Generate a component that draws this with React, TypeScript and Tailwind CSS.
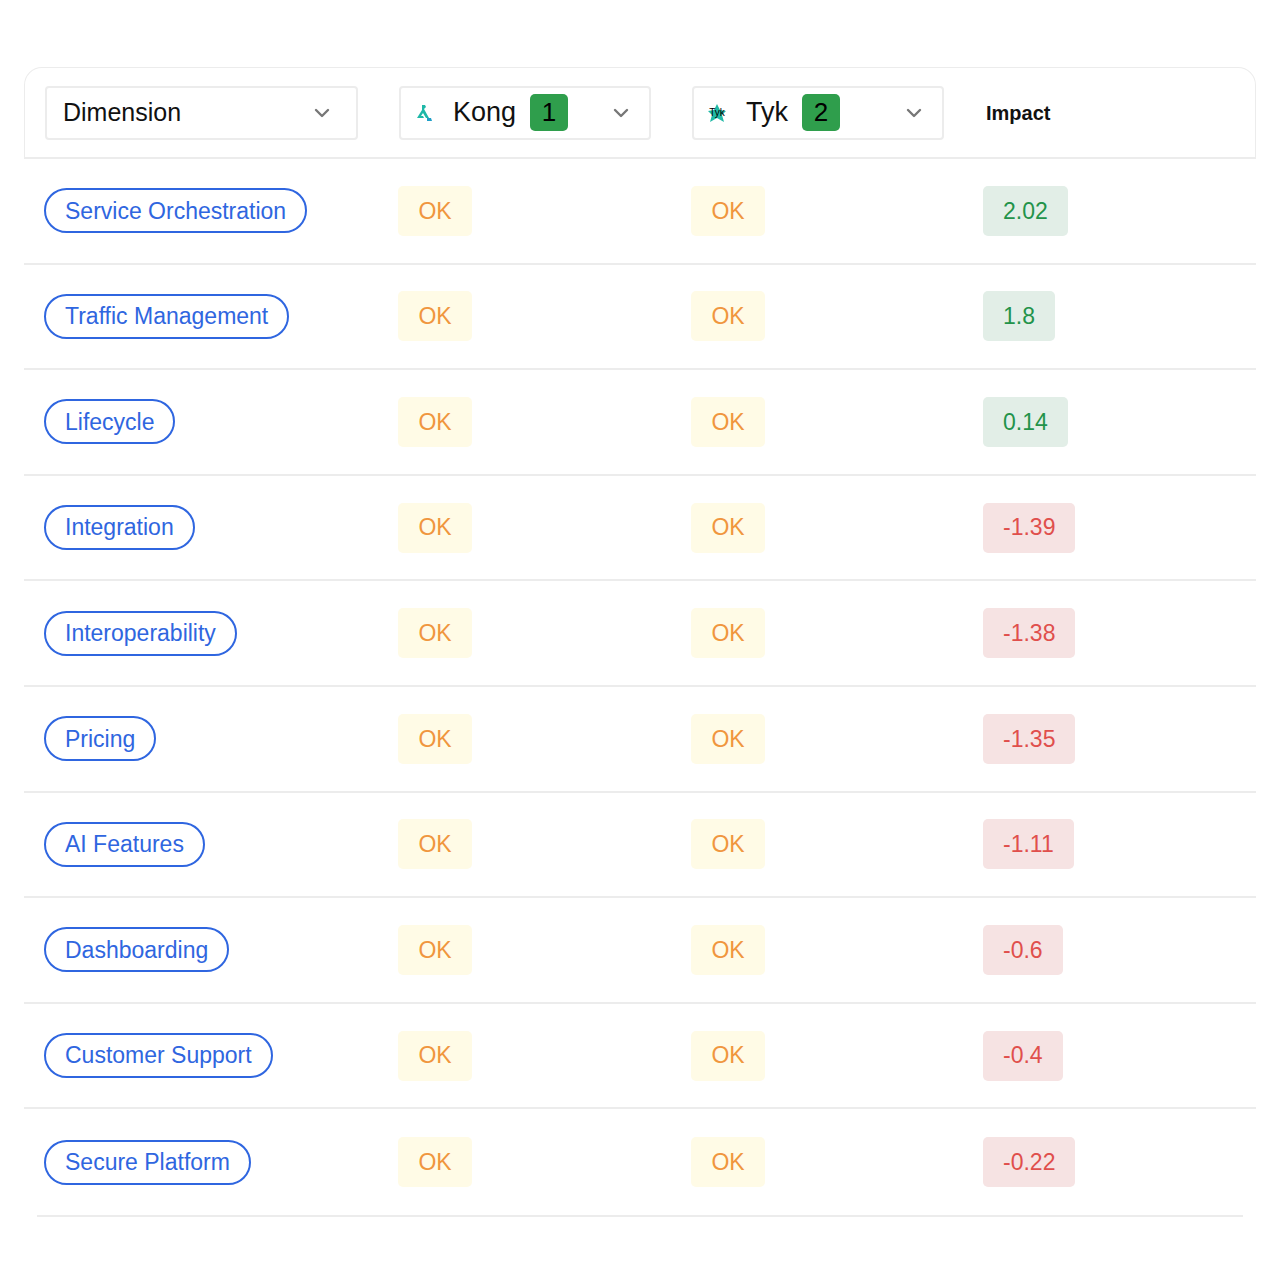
import React from "react";

const rows: [string, string][] = [
  ["Service Orchestration", "2.02"],
  ["Traffic Management", "1.8"],
  ["Lifecycle", "0.14"],
  ["Integration", "-1.39"],
  ["Interoperability", "-1.38"],
  ["Pricing", "-1.35"],
  ["AI Features", "-1.11"],
  ["Dashboarding", "-0.6"],
  ["Customer Support", "-0.4"],
  ["Secure Platform", "-0.22"],
];

const Chevron = () => (
  <svg width="20" height="20" viewBox="0 0 20 20" fill="none" stroke="#777" strokeWidth="2.4" strokeLinecap="round" strokeLinejoin="round">
    <path d="M4 7l6 6 6-6" />
  </svg>
);

const KongIcon = () => (
  <div className="w-[26px] h-[26px] flex items-center justify-center bg-white">
    <svg width="22" height="22" viewBox="0 0 22 22">
      <path d="M9 3h3l1 2-2 2 5 9h-3l-3-5-2 3h2l1 2H4l5-8z" fill="#1fb8a8" />
      <path d="M14 16h4l1 3h-5z" fill="#1f9fc8" />
    </svg>
  </div>
);

const TykIcon = () => (
  <div className="relative w-[26px] h-[26px] flex items-center justify-center">
    <svg width="24" height="24" viewBox="0 0 24 24" className="absolute">
      <path d="M12 3l3 6 6 1-4 4 2 7-7-4-7 4 2-7-4-4 6-1z" fill="#20b9a6" />
    </svg>
    <span className="relative text-[10px] leading-none text-black" style={{ fontFamily: "'Liberation Sans', sans-serif" }}>Tyk</span>
  </div>
);

export default function App() {
  return (
    <div className="w-[1280px] h-[1280px] bg-white pt-[67px] px-[24px]" style={{ fontFamily: "'Liberation Sans', Arial, sans-serif" }}>
      <div className="w-[1232px]">
        <div className="h-[92px] border border-b-2 border-[#ececec] rounded-t-[18px] flex items-center pl-[20px]">
          <div className="w-[313px] h-[54px] border-2 border-[#ececec] rounded-[4px] flex items-center justify-between pl-[16px] pr-[24px]">
            <span className="text-[25px] text-[#111]">Dimension</span>
            <Chevron />
          </div>
          <div className="ml-[41px] w-[252px] h-[54px] border-2 border-[#ececec] rounded-[4px] flex items-center pl-[10px] pr-[18px]">
            <KongIcon />
            <span className="ml-[16px] text-[27px] text-[#111]">Kong</span>
            <span className="ml-[14px] w-[38px] h-[37px] rounded-[5px] bg-[#2f9e4c] text-[26px] text-black flex items-center justify-center">1</span>
            <div className="ml-auto"><Chevron /></div>
          </div>
          <div className="ml-[41px] w-[252px] h-[54px] border-2 border-[#ececec] rounded-[4px] flex items-center pl-[10px] pr-[18px]">
            <TykIcon />
            <span className="ml-[16px] text-[27px] text-[#111]">Tyk</span>
            <span className="ml-[14px] w-[38px] h-[37px] rounded-[5px] bg-[#2f9e4c] text-[26px] text-black flex items-center justify-center">2</span>
            <div className="ml-auto"><Chevron /></div>
          </div>
          <span className="ml-[42px] text-[20px] font-bold text-[#111]">Impact</span>
        </div>
        {rows.map(([name, v], i) => {
          const neg = v.startsWith("-");
          const last = i === rows.length - 1;
          return (
            <div key={name} className={`h-[105.6px] flex items-center pl-[20px] ${last ? "" : "border-b-2 border-[#ececec]"}`}>
              <div className="w-[354px]">
                <span className="inline-flex items-center h-[45px] px-[19px] border-2 border-[#2f66e0] rounded-full text-[23px] text-[#2f66e0]">{name}</span>
              </div>
              <div className="w-[293px]">
                <span className="inline-flex items-center justify-center w-[74px] h-[50px] rounded-[5px] bg-[#fffbe6] text-[23px] text-[#f0963e]">OK</span>
              </div>
              <div className="w-[292px]">
                <span className="inline-flex items-center justify-center w-[74px] h-[50px] rounded-[5px] bg-[#fffbe6] text-[23px] text-[#f0963e]">OK</span>
              </div>
              <span className={`inline-flex items-center h-[50px] px-[20px] rounded-[5px] text-[23px] ${neg ? "bg-[#f6e3e3] text-[#e04f4c]" : "bg-[#e2eee7] text-[#23934a]"}`}>{v}</span>
            </div>
          );
        })}
        <div className="mx-[13px] border-t-2 border-[#ececec]" />
      </div>
    </div>
  );
}
